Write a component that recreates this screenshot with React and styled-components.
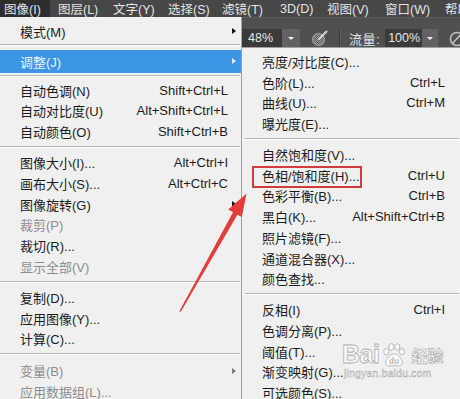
import React from 'react';
import styled, { createGlobalStyle } from 'styled-components';

const Global = createGlobalStyle`
  html, body { margin: 0; padding: 0; background: #f0f0f0; overflow: hidden; }
  * { box-sizing: border-box; }
`;

const FONT = `"Liberation Sans", "Noto Sans CJK SC", sans-serif`;

const Page = styled.div`
  position: relative;
  width: 460px;
  height: 399px;
  overflow: hidden;
  font-family: ${FONT};
  font-size: 13px;
  background: #f0f0f0;
`;

const MenuBar = styled.div`
  display: flex;
  gap: 4px;
  height: 17px;
  background: #474747;
  white-space: nowrap;
`;

const BarItem = styled.div`
  flex: none;
  width: ${p => (p.$w ? `${p.$w}px` : 'auto')};
  padding-left: 4px;
  display: flex;
  align-items: center;
  color: #e4e4e4;
  font-size: 12.5px;
  background: ${p => (p.$active ? '#2e2e2e' : 'transparent')};
`;

const Main = styled.div`
  display: flex;
  height: 382px;
`;

const LeftMenu = styled.div`
  flex: none;
  width: 242px;
  padding-top: 4px;
  background: #f0f0f0;
  border-right: 1px solid #a6a6a6;
`;

const Row = styled.div`
  display: flex;
  align-items: center;
  height: ${p => p.$h}px;
  padding: ${p => (p.$sub ? '0 15px 0 20px' : '0 4px 0 20px')};
  color: ${p => (p.$active ? '#eaf3fc' : p.$disabled ? '#8d8d8d' : '#1c1c1c')};
  background: ${p => (p.$active ? '#3d95e6' : 'transparent')};
  white-space: nowrap;
`;

const Label = styled.span`
  position: relative;
  flex: 1;
`;

const Boxed = styled.span`
  position: relative;
  &::after {
    content: '';
    position: absolute;
    left: -10px;
    right: -2px;
    top: -3px;
    bottom: -4px;
    border: 2px solid #d23c3f;
  }
`;

const Shortcut = styled.span`
  flex: none;
`;

const ArrowCell = styled.span`
  flex: none;
  width: 9px;
  display: flex;
  justify-content: flex-end;
  padding-right: 1px;
`;

const Tri = styled.span`
  width: 0;
  height: 0;
  border-top: 3.5px solid transparent;
  border-bottom: 3.5px solid transparent;
  border-left: 4px solid ${p => p.$c};
`;

const Sep = styled.div`
  height: 2px;
  margin: ${p => p.$mt}px ${p => p.$mr || 1}px ${p => p.$mb}px ${p => p.$ml || 0}px;
  border-top: 1px solid #b6b6b6;
  border-bottom: 1px solid #ffffff;
`;

const RightCol = styled.div`
  flex: 1;
  display: flex;
  flex-direction: column;
  min-width: 0;
`;

const OptionsBar = styled.div`
  flex: none;
  height: 30px;
  display: flex;
  align-items: center;
  padding-top: 11px;
  background: #505050;
  border-top: 1px solid #5c5c5c;
  color: #e2e2e2;
  white-space: nowrap;
`;

const Field = styled.div`
  flex: none;
  width: ${p => p.$w}px;
  height: 19px;
  display: flex;
  align-items: center;
  padding-left: ${p => p.$pl}px;
  background: #3a3a3a;
  color: #e6e6e6;
  font-size: 12.5px;
`;

const DropBtn = styled.div`
  flex: none;
  width: ${p => p.$w}px;
  height: 19px;
  display: flex;
  align-items: center;
  justify-content: center;
  background: #626262;
  margin-right: ${p => p.$mr}px;
  &::before {
    content: '';
    border-left: 3px solid transparent;
    border-right: 3px solid transparent;
    border-top: 3px solid #f0f0f0;
  }
`;

const VSep = styled.div`
  flex: none;
  width: 2px;
  height: 19px;
  border-left: 1px solid #3a3a3a;
  border-right: 1px solid #5e5e5e;
  margin: 0 8px 0 10px;
`;

const BarLabel = styled.span`
  flex: none;
  font-size: 13px;
  margin-right: 5px;
  letter-spacing: 0.5px;
`;

const IconWrap = styled.span`
  flex: none;
  display: flex;
  margin-left: ${p => p.$ml || 0}px;
`;

const SubMenu = styled.div`
  flex: 1;
  padding-top: 3px;
  background: #f0f0f0;
  border-top: 1px solid #a0a0a0;
  margin-left: -1px;
  border-left: 1px solid #a0a0a0;
`;

const ArrowSvg = styled.svg`
  position: absolute;
  left: 0;
  top: 0;
  pointer-events: none;
`;

const Watermark = styled.div`
  position: absolute;
  left: 342px;
  top: 342px;
  display: flex;
  flex-direction: column;
  color: #ffffff;
  opacity: 0.95;
`;

const WmTop = styled.div`
  display: flex;
  align-items: center;
  gap: 3px;
`;

const WmBai = styled.span`
  font-family: "Liberation Sans", sans-serif;
  font-size: 25px;
  font-weight: bold;
  line-height: 25px;
  letter-spacing: -0.5px;
  -webkit-text-stroke: 0.8px #a9a9a9;
`;

const WmJy = styled.span`
  font-family: "Noto Sans CJK SC", sans-serif;
  font-size: 16px;
  font-weight: bold;
  line-height: 18px;
  margin-left: 2px;
  -webkit-text-stroke: 0.7px #a9a9a9;
`;

const WmUrl = styled.span`
  font-family: "Liberation Sans", sans-serif;
  font-size: 10px;
  line-height: 13px;
  margin-left: 2px;
  letter-spacing: 0.4px;
  -webkit-text-stroke: 0.5px #a9a9a9;
`;

const barItems = [
  { t: '图像(I)', w: 50, active: true },
  { t: '图层(L)', w: 51 },
  { t: '文字(Y)', w: 51 },
  { t: '选择(S)', w: 50 },
  { t: '滤镜(T)', w: 54 },
  { t: '3D(D)', w: 43 },
  { t: '视图(V)', w: 54 },
  { t: '窗口(W)', w: 56 },
  { t: '帮助(H)' },
];

const leftItems = [
  { t: '模式(M)', arrow: true },
  { sep: true, mt: 2, mb: 4 },
  { t: '调整(J)', arrow: true, active: true, h: 23 },
  { sep: true, mt: 2, mb: 3 },
  { t: '自动色调(N)', sc: 'Shift+Ctrl+L' },
  { t: '自动对比度(U)', sc: 'Alt+Shift+Ctrl+L' },
  { t: '自动颜色(O)', sc: 'Shift+Ctrl+B' },
  { sep: true },
  { t: '图像大小(I)...', sc: 'Alt+Ctrl+I' },
  { t: '画布大小(S)...', sc: 'Alt+Ctrl+C' },
  { t: '图像旋转(G)', arrow: true },
  { t: '裁剪(P)', disabled: true },
  { t: '裁切(R)...' },
  { t: '显示全部(V)', disabled: true },
  { sep: true },
  { t: '复制(D)...' },
  { t: '应用图像(Y)...' },
  { t: '计算(C)...' },
  { sep: true, mb: 5 },
  { t: '变量(B)', disabled: true, arrow: true },
  { t: '应用数据组(L)...', disabled: true },
];

const subItems = [
  { t: '亮度/对比度(C)...' },
  { t: '色阶(L)...', sc: 'Ctrl+L' },
  { t: '曲线(U)...', sc: 'Ctrl+M' },
  { t: '曝光度(E)...' },
  { sep: true },
  { t: '自然饱和度(V)...' },
  { t: '色相/饱和度(H)...', sc: 'Ctrl+U', boxed: true },
  { t: '色彩平衡(B)...', sc: 'Ctrl+B' },
  { t: '黑白(K)...', sc: 'Alt+Shift+Ctrl+B' },
  { t: '照片滤镜(F)...' },
  { t: '通道混合器(X)...' },
  { t: '颜色查找...' },
  { sep: true },
  { t: '反相(I)', sc: 'Ctrl+I' },
  { t: '色调分离(P)...' },
  { t: '阈值(T)...' },
  { t: '渐变映射(G)...' },
  { t: '可选颜色(S)...' },
];

function AirbrushIcon() {
  return (
    <svg width="18" height="18" viewBox="0 0 18 18">
      <defs>
        <pattern id="hatch" width="2" height="2" patternUnits="userSpaceOnUse">
          <rect width="2" height="2" fill="#5a5a5a" />
          <rect width="1" height="1" fill="#9a9a9a" />
          <rect x="1" y="1" width="1" height="1" fill="#9a9a9a" />
        </pattern>
      </defs>
      <circle cx="7.5" cy="10.5" r="6" fill="url(#hatch)" stroke="#a8a8a8" strokeWidth="1" />
      <path d="M8 10 L15.5 2.5" stroke="#d8d8d8" strokeWidth="2" strokeLinecap="round" />
    </svg>
  );
}

function PressureIcon() {
  return (
    <svg width="16" height="18" viewBox="0 0 16 18">
      <circle cx="9" cy="10" r="6.5" fill="none" stroke="#bdbdbd" strokeWidth="1.6" />
      <path d="M4 15 L14 4" stroke="#bdbdbd" strokeWidth="1.6" />
    </svg>
  );
}

function MenuRows({ items, sub, rowH }) {
  return items.map((it, i) => {
    if (it.sep) {
      return (
        <Sep
          key={i}
          $mt={it.mt ?? 4}
          $mb={it.mb ?? 4}
          $ml={sub ? 3 : 0}
          $mr={sub ? 0 : 1}
        />
      );
    }
    const triColor = it.active ? '#e3eefa' : it.disabled ? '#7a7a7a' : '#111111';
    return (
      <Row key={i} $h={it.h || rowH} $sub={sub} $active={it.active} $disabled={it.disabled}>
        <Label>{it.boxed ? <Boxed>{it.t}</Boxed> : it.t}</Label>
        {it.sc && <Shortcut>{it.sc}</Shortcut>}
        {!sub && (
          <ArrowCell>{it.arrow && <Tri $c={triColor} />}</ArrowCell>
        )}
      </Row>
    );
  });
}

function RedArrow() {
  const pts = [
    [179.4, 311.2],
    [233.0, 212.3],
    [228.2, 209.4],
    [246.5, 193.5],
    [241.8, 217.0],
    [237.4, 214.8],
    [180.8, 311.8],
  ];
  return (
    <ArrowSvg width="460" height="399" viewBox="0 0 460 399">
      <polygon points={pts.map(p => p.join(',')).join(' ')} fill="#e43c3a" />
    </ArrowSvg>
  );
}

function BaiduPaw() {
  return (
    <svg width="24" height="24" viewBox="0 0 22 22">
      <g fill="#ffffff" stroke="#a9a9a9" strokeWidth="0.8">
        <ellipse cx="4" cy="8" rx="2.4" ry="3" />
        <ellipse cx="8.5" cy="3.6" rx="2.4" ry="3" />
        <ellipse cx="14" cy="3.6" rx="2.4" ry="3" />
        <ellipse cx="18.3" cy="8" rx="2.4" ry="3" />
        <path d="M11 10 C7 10 4 15 3.5 17 C3 20 5.5 21.5 8 21 C9.6 20.7 12.4 20.7 14 21 C16.5 21.5 19 20 18.5 17 C18 15 15 10 11 10 Z" />
      </g>
      <text x="11" y="19.5" textAnchor="middle" fontFamily="Liberation Sans, sans-serif" fontWeight="bold" fontSize="7.5" fill="#b8b8b8">du</text>
    </svg>
  );
}

export default function App() {
  return (
    <Page>
      <Global />
      <MenuBar>
        {barItems.map((b, i) => (
          <BarItem key={i} $w={b.w} $active={b.active}>{b.t}</BarItem>
        ))}
      </MenuBar>
      <Main>
        <LeftMenu>
          <MenuRows items={leftItems} rowH={20.8} />
        </LeftMenu>
        <RightCol>
          <OptionsBar>
            <Field $w={40} $pl={6}>48%</Field>
            <DropBtn $w={18} $mr={11} />
            <IconWrap>
              <AirbrushIcon />
            </IconWrap>
            <VSep />
            <BarLabel>流量:</BarLabel>
            <Field $w={37} $pl={3}>100%</Field>
            <DropBtn $w={16} $mr={10} />
            <IconWrap>
              <PressureIcon />
            </IconWrap>
          </OptionsBar>
          <SubMenu>
            <MenuRows items={subItems} sub rowH={20.75} />
          </SubMenu>
        </RightCol>
      </Main>
      <RedArrow />
      <Watermark>
        <WmTop>
          <WmBai>Bai</WmBai>
          <BaiduPaw />
          <WmJy>经验</WmJy>
        </WmTop>
        <WmUrl>jingyan.baidu.com</WmUrl>
      </Watermark>
    </Page>
  );
}
